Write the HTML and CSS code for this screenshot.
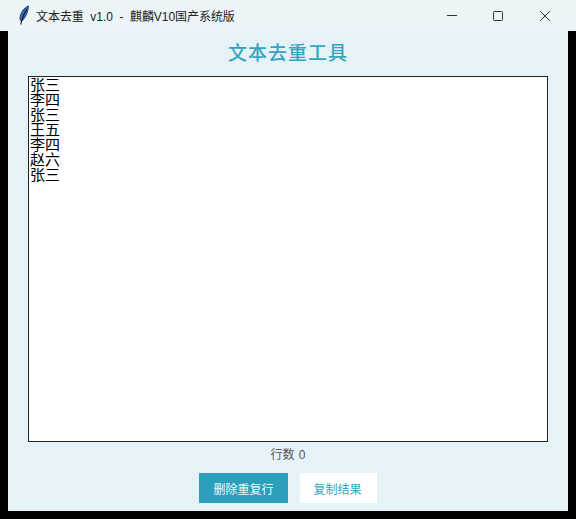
FILE: index.html
```html
<!DOCTYPE html>
<html lang="zh-CN">
<head>
    <meta charset="UTF-8">
    <meta name="viewport" content="width=device-width, initial-scale=1.0">
    <title>文本去重</title>
    <link rel="stylesheet" href="styles.css">
</head>
<body>
    <div class="titlebar">
        <svg class="app-icon" width="12" height="24" viewBox="0 0 12 24">
            <path d="M10.5 2 C6 3.5 2.5 8.5 2 14 C1.9 15.5 2.4 16.8 3.4 17.2 C6.5 15.5 10 9 10.5 2 Z" fill="#2f6fc4" stroke="#1c2a44" stroke-width="0.8"/>
            <path d="M9 5 C6.5 8.5 4.5 13 2.8 20.5" fill="none" stroke="#0b0f18" stroke-width="1.1"/>
        </svg>
        <span class="window-title">文本去重&nbsp; v1.0&nbsp; -&nbsp; 麒麟V10国产系统版</span>
        <div class="window-controls">
            <button class="window-btn">
                <svg width="12" height="12" viewBox="0 0 12 12"><path d="M1 5.5 H11" stroke="#333" fill="none"/></svg>
            </button>
            <button class="window-btn">
                <svg width="12" height="12" viewBox="0 0 12 12"><rect x="1.5" y="1.5" width="9" height="9" rx="1" stroke="#333" fill="none"/></svg>
            </button>
            <button class="window-btn window-close">
                <svg width="12" height="12" viewBox="0 0 12 12"><path d="M1 1 L11 11 M11 1 L1 11" stroke="#333" fill="none"/></svg>
            </button>
        </div>
    </div>

    <div class="app">
        <h1 class="app-title">文本去重工具</h1>
        <div class="editor">
            <div class="editor-line">张三</div>
            <div class="editor-line">李四</div>
            <div class="editor-line">张三</div>
            <div class="editor-line">王五</div>
            <div class="editor-line">李四</div>
            <div class="editor-line">赵六</div>
            <div class="editor-line">张三</div>
        </div>
        <div class="line-count">行数 0</div>
        <div class="actions">
            <button class="btn btn-primary">删除重复行</button>
            <button class="btn btn-secondary">复制结果</button>
        </div>
    </div>
</body>
</html>
```

FILE: styles.css
```css
body {
    margin: 0;
    padding: 0;
    width: 576px;
    height: 519px;
    overflow: hidden;
    background-color: #000;
    font-family: "Liberation Sans", "Noto Sans CJK SC", sans-serif;
}

/* Window title bar */
.titlebar {
    display: flex;
    align-items: center;
    height: 31px;
    padding: 0 7px 0 18px;
    background-color: #ecf4f8;
}

.app-icon {
    display: block;
}

.window-title {
    margin-left: 6px;
    font-size: 12px;
    letter-spacing: -0.05px;
    color: #222;
    white-space: nowrap;
}

.window-controls {
    display: flex;
    margin-left: auto;
}

.window-btn {
    display: flex;
    align-items: center;
    justify-content: center;
    width: 46px;
    height: 31px;
    padding: 0;
    border: none;
    background: none;
}

.window-close {
    width: 48px;
}

/* Main panel */
.app {
    display: flex;
    flex-direction: column;
    align-items: center;
    height: 480px;
    margin: 0 8px;
    padding: 0 20px;
    box-sizing: border-box;
    background-color: #e5f2f8;
}

.app-title {
    height: 45px;
    margin: 0;
    font-size: 19px;
    line-height: 45px;
    font-weight: 500;
    letter-spacing: 1px;
    color: #35a4c0;
}

.editor {
    width: 100%;
    height: 366px;
    box-sizing: border-box;
    padding-left: 1px;
    border: 1px solid #222;
    background-color: #fff;
    font-size: 15px;
    line-height: 15px;
    color: #000;
}

.line-count {
    height: 23px;
    padding-top: 1px;
    font-size: 12px;
    line-height: 24px;
    word-spacing: 1px;
    color: #555;
}

.actions {
    display: flex;
    gap: 12px;
    margin-top: 7px;
}

.btn {
    height: 30px;
    padding: 0;
    border: none;
    font-family: inherit;
    font-size: 12px;
}

.btn-primary {
    width: 89px;
    background-color: #2b9fbb;
    color: #f2fafc;
}

.btn-secondary {
    width: 77px;
    padding-right: 2px;
    background-color: #fff;
    color: #35a4c0;
}
```
